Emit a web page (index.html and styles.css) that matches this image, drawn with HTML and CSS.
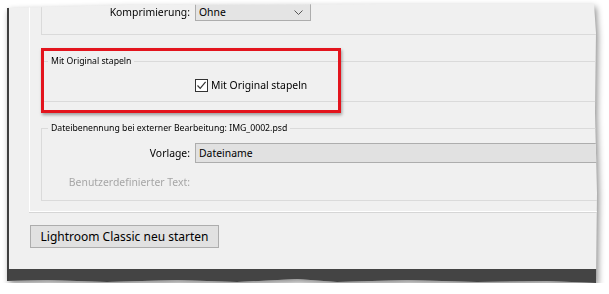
FILE: index.html
```html
<!DOCTYPE html>
<html lang="de">
<head>
    <meta charset="UTF-8">
    <title>Voreinstellungen - Externe Bearbeitung</title>
    <link rel="stylesheet" href="styles.css">
</head>
<body>
<div class="sheet">
    <div class="window">
        <div class="page">
            <fieldset class="group g1">
                <div class="row">
                    <label class="label">Komprimierung:</label>
                    <div class="select small">
                        <span>Ohne</span>
                        <svg class="chevron" width="9" height="5" viewBox="0 0 9 5"><path d="M0.5 0.5 L4.5 4.5 L8.5 0.5" fill="none" stroke="#555" stroke-width="1"/></svg>
                    </div>
                </div>
            </fieldset>

            <fieldset class="group g2">
                <legend>Mit Original stapeln</legend>
                <div class="row">
                    <span class="label"></span>
                    <label class="check">
                        <span class="box">
                            <svg width="11" height="11" viewBox="0 0 11 11"><path d="M1.5 5.5 L4.2 8.3 L9.6 1.8" fill="none" stroke="#333" stroke-width="1.2"/></svg>
                        </span>
                        Mit Original stapeln
                    </label>
                </div>
            </fieldset>

            <fieldset class="group g3">
                <legend>Dateibenennung bei externer Bearbeitung: IMG_0002.psd</legend>
                <div class="row">
                    <label class="label">Vorlage:</label>
                    <div class="select wide"><span>Dateiname</span></div>
                </div>
                <div class="row text-row">
                    <label class="label disabled">Benutzerdefinierter Text:</label>
                </div>
            </fieldset>

            <div class="highlight"></div>
        </div>

        <div class="actions">
            <button class="btn">Lightroom Classic neu starten</button>
        </div>
        <div class="frame-bottom"></div>
    </div>
</div>
</body>
</html>
```

FILE: styles.css
```css
html {
    font-family: "Noto Sans", "Liberation Sans", sans-serif;
    font-size: 10.4px;
    color: #000;
    background: #fff;
}
body {
    margin: 0;
}
.sheet {
    padding: 3px 0 0 7px;
    filter: drop-shadow(2px 3px 3px rgba(0, 0, 0, 0.45));
}
.window {
    position: relative;
    width: 591px;
    height: 280px;
    box-sizing: border-box;
    background: #f0f0f0;
    border-left: 2px solid #3f3f3f;
    overflow: hidden;
    display: flex;
    flex-direction: column;
    clip-path: polygon(0 5px, 120px 2px, 380px 1px, 587px 1px, 589px 30px, 588px 110px, 590px 190px, 589px 280px,
        540px 278px, 470px 279px, 400px 277px, 330px 279px, 290px 276px, 230px 279px, 170px 277px, 100px 279px, 40px 277px, 0 278px);
}
.page {
    position: relative;
    margin-left: 20px;
    width: 700px;
    border-left: 1px solid #fff;
    border-bottom: 1px solid #fff;
    box-shadow: 0 1px 0 #d6d6d6;
    padding: 0 0 10px 11px;
}
.group {
    margin: 0;
    padding: 0;
    border: 1px solid #dadada;
    min-width: 0;
}
.group legend {
    font-size: 8.7px;
    line-height: 13px;
    padding: 0 3px;
    margin-left: 6px;
}
.g1 {
    border-top: none;
    padding: 0 0 13px;
}
.g2 {
    margin-top: 20px;
    padding: 9px 0 8px;
}
.g3 {
    margin-top: 20px;
    padding: 8px 0 10px;
}
.row {
    display: flex;
    align-items: center;
    gap: 5px;
    min-height: 16px;
}
.text-row {
    margin-top: 11px;
}
.label {
    width: 148px;
    text-align: right;
    flex: none;
}
.label.disabled {
    color: #a6a6a6;
}
.select {
    box-sizing: border-box;
    background: #e4e4e4;
    border: 1px solid #adadad;
    display: flex;
    align-items: center;
    padding: 0 3px;
    position: relative;
}
.select.small {
    width: 116px;
    height: 18px;
}
.select.wide {
    width: 480px;
    height: 20px;
    background: #e1e1e1;
}
.chevron {
    position: absolute;
    right: 7px;
    top: 6px;
}
.check {
    display: flex;
    align-items: center;
    gap: 3px;
}
.box {
    width: 11px;
    height: 11px;
    border: 1px solid #333;
    background: #fff;
    display: flex;
}
.highlight {
    position: absolute;
    left: 11px;
    top: 45px;
    width: 300px;
    height: 65px;
    box-sizing: border-box;
    border: 3px solid #e3141d;
    box-shadow: 1px 2px 3px rgba(0, 0, 0, 0.35);
}
.actions {
    padding: 13px 0 0 21px;
}
.btn {
    font: inherit;
    font-size: 12px;
    width: 189px;
    height: 23px;
    background: #e1e1e1;
    border: 1px solid #adadad;
    padding: 0;
    color: #000;
}
.frame-bottom {
    margin-top: auto;
    height: 14px;
    background: #444;
}
```
